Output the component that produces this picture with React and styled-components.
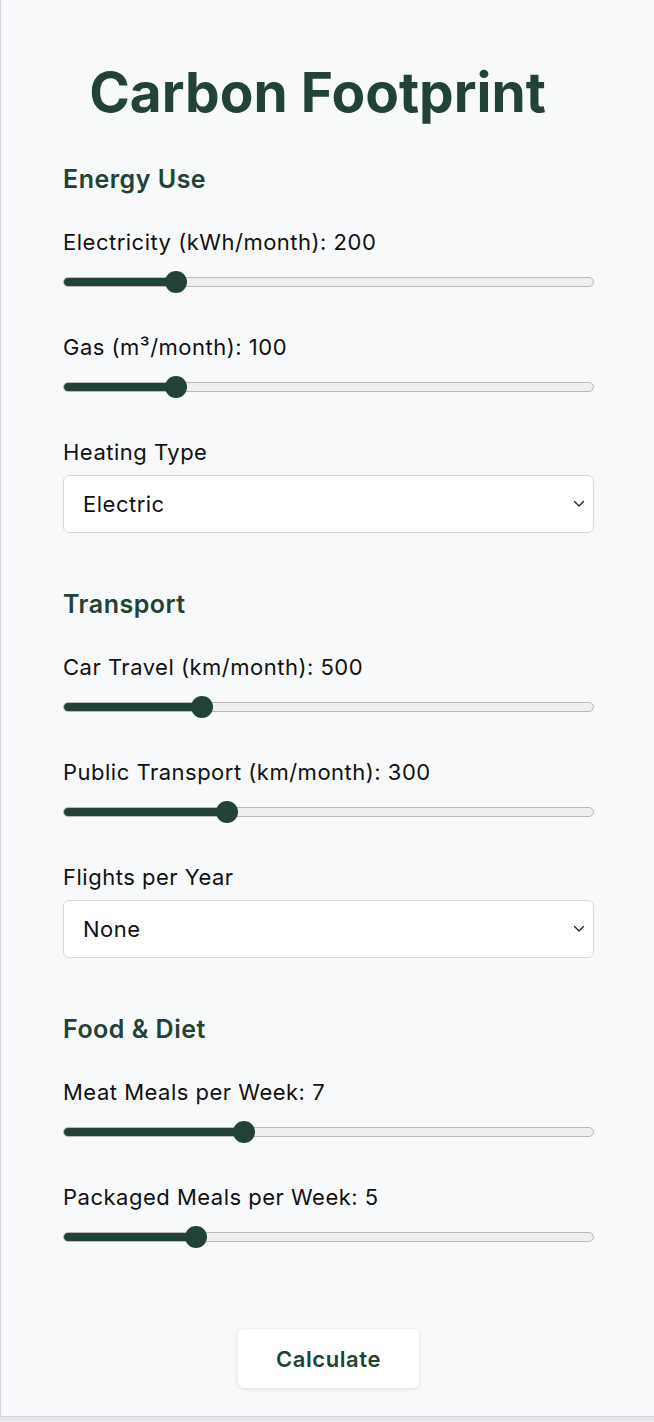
import React, { useState } from "react";
import styled, { createGlobalStyle } from "styled-components";

const Global = createGlobalStyle`
  html, body { margin: 0; padding: 0; background: #e6e7ec; }
  body { font-family: Inter, "Noto Sans", "Liberation Sans", sans-serif; }
  * { box-sizing: border-box; }
`;

const Page = styled.div`
  background: #f8f9fb;
  border-left: 1px solid #d3d5da;
  border-bottom: 1px solid #d3d5da;
  padding: 59px 60px 28px 62px;
  width: 654px;
`;

const Title = styled.h1`
  margin: 0 0 39px;
  padding-right: 22px;
  text-align: center;
  font-size: 55px;
  line-height: 66px;
  font-weight: 700;
  color: #224236;
`;

const Section = styled.section`
  margin-bottom: 56px;
`;

const SectionTitle = styled.h2`
  margin: 0 0 35px;
  font-size: 25px;
  line-height: 30px;
  font-weight: 600;
  letter-spacing: 0.5px;
  color: #224236;
`;

const Field = styled.div`
  display: flex;
  flex-direction: column;
  gap: ${(p) => (p.$select ? "9px" : "15px")};
  &:not(:last-child) {
    margin-bottom: 41px;
  }
`;

const Label = styled.label`
  font-size: 22px;
  line-height: 27px;
  letter-spacing: 0.5px;
  color: #111;
  font-weight: 400;
`;

const Range = styled.input.attrs({ type: "range" })`
  -webkit-appearance: none;
  appearance: none;
  width: 100%;
  height: 22px;
  margin: 0;
  background: transparent;
  outline: none;

  &::-webkit-slider-runnable-track {
    height: 10px;
    border-radius: 5px;
    border: 1px solid #b9b9bb;
    background: linear-gradient(
      to right,
      #224236 0,
      #224236 calc(11px + ${(p) => p.$pct} * (100% - 22px)),
      #efefef calc(11px + ${(p) => p.$pct} * (100% - 22px)),
      #efefef 100%
    );
  }
  &::-webkit-slider-thumb {
    -webkit-appearance: none;
    appearance: none;
    width: 22px;
    height: 22px;
    border-radius: 50%;
    background: #224236;
    border: none;
    margin-top: -7px;
  }
`;

const SelectWrap = styled.div`
  position: relative;
  width: 100%;
`;

const Select = styled.select`
  -webkit-appearance: none;
  appearance: none;
  width: 100%;
  height: 58px;
  padding: 0 40px 0 19px;
  border: 1px solid #d8d9dc;
  border-radius: 6px;
  background: #fff;
  font-family: inherit;
  font-size: 22px;
  letter-spacing: 0.5px;
  color: #111;
  outline: none;
`;

const Chevron = styled.svg`
  position: absolute;
  right: 9px;
  top: 50%;
  transform: translateY(-50%);
  pointer-events: none;
`;

const ButtonRow = styled.div`
  display: flex;
  justify-content: center;
  padding-top: 25px;
`;

const Button = styled.button`
  width: 181px;
  height: 59px;
  background: #fff;
  border: none;
  border-radius: 6px;
  box-shadow: 0 1px 4px rgba(0, 0, 0, 0.12);
  font-family: inherit;
  font-size: 22px;
  letter-spacing: 0.6px;
  font-weight: 600;
  color: #224236;
  cursor: pointer;
`;

function SliderField({ label, value, max, onChange }) {
  return (
    <Field>
      <Label>
        {label}: {value}
      </Label>
      <Range
        min={0}
        max={max}
        value={value}
        $pct={value / max}
        onChange={(e) => onChange(Number(e.target.value))}
      />
    </Field>
  );
}

function SelectField({ label, value, options, onChange }) {
  return (
    <Field $select>
      <Label>{label}</Label>
      <SelectWrap>
        <Select value={value} onChange={(e) => onChange(e.target.value)}>
          {options.map((o) => (
            <option key={o}>{o}</option>
          ))}
        </Select>
        <Chevron width="12" height="8" viewBox="0 0 12 8">
          <path d="M1.5 1.5 L6 6 L10.5 1.5" fill="none" stroke="#222" strokeWidth="1.3" strokeLinecap="round" strokeLinejoin="round" />
        </Chevron>
      </SelectWrap>
    </Field>
  );
}

export default function App() {
  const [s, set] = useState({
    elec: 200,
    gas: 100,
    heat: "Electric",
    car: 500,
    pub: 300,
    flights: "None",
    meat: 7,
    pack: 5,
  });
  const up = (k) => (v) => set((o) => ({ ...o, [k]: v }));

  return (
    <>
      <Global />
      <Page>
        <Title>Carbon Footprint</Title>
        <Section>
          <SectionTitle>Energy Use</SectionTitle>
          <SliderField label="Electricity (kWh/month)" value={s.elec} max={1000} onChange={up("elec")} />
          <SliderField label="Gas (m³/month)" value={s.gas} max={500} onChange={up("gas")} />
          <SelectField label="Heating Type" value={s.heat} options={["Electric", "Gas", "Oil", "Heat Pump"]} onChange={up("heat")} />
        </Section>
        <Section>
          <SectionTitle>Transport</SectionTitle>
          <SliderField label="Car Travel (km/month)" value={s.car} max={2000} onChange={up("car")} />
          <SliderField label="Public Transport (km/month)" value={s.pub} max={1000} onChange={up("pub")} />
          <SelectField label="Flights per Year" value={s.flights} options={["None", "1-2", "3-5", "6+"]} onChange={up("flights")} />
        </Section>
        <Section>
          <SectionTitle>Food &amp; Diet</SectionTitle>
          <SliderField label="Meat Meals per Week" value={s.meat} max={21} onChange={up("meat")} />
          <SliderField label="Packaged Meals per Week" value={s.pack} max={21} onChange={up("pack")} />
        </Section>
        <ButtonRow>
          <Button>Calculate</Button>
        </ButtonRow>
      </Page>
    </>
  );
}
